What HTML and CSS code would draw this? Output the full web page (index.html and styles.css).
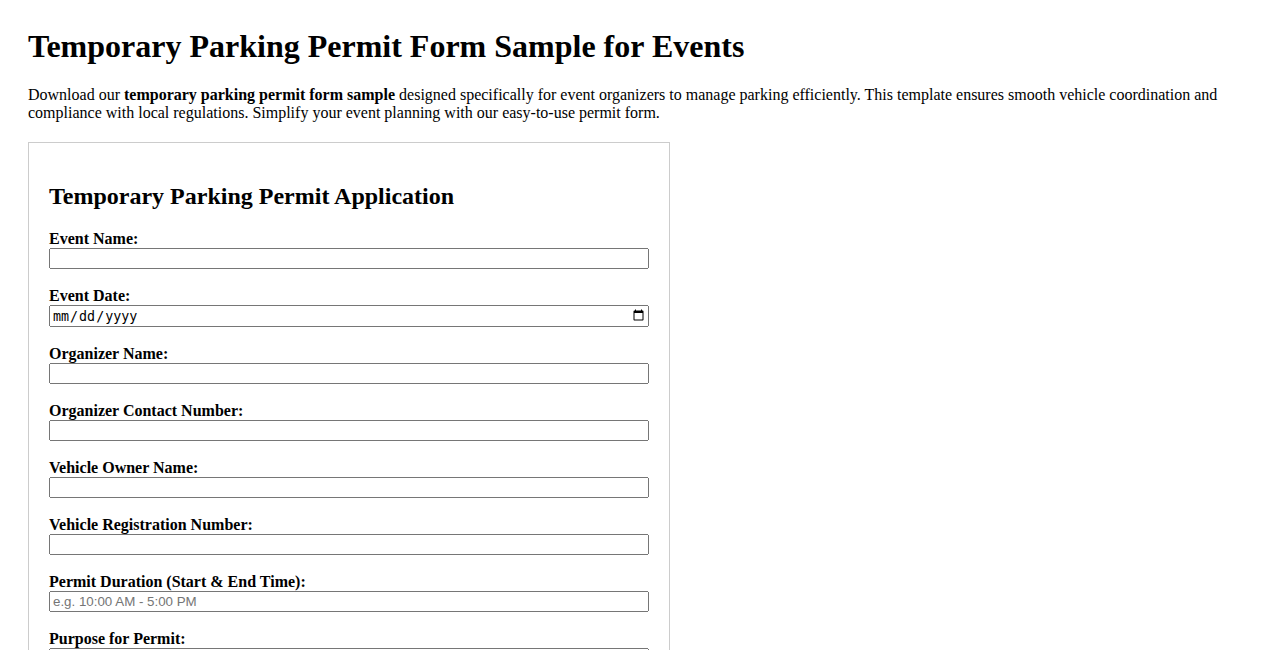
FILE: index.html
```html
<!DOCTYPE html>
<html lang="en">
<head>
<meta charset="utf-8">
<title>Temporary Parking Permit Form Sample for Events</title>
<link rel="stylesheet" href="styles.css">
</head>
<body>
<div class="page">
  <h1 class="title">Temporary Parking Permit Form Sample for Events</h1>
  <p class="intro">Download our <strong>temporary parking permit form sample</strong> designed specifically for event organizers to manage parking efficiently. This template ensures smooth vehicle coordination and compliance with local regulations. Simplify your event planning with our easy-to-use permit form.</p>
  <form class="permit-form">
    <h2 class="form-title">Temporary Parking Permit Application</h2>
    <label class="field-label" for="event-name">Event Name:</label>
    <input class="field-input" type="text" id="event-name">
    <label class="field-label" for="event-date">Event Date:</label>
    <input class="field-input" type="date" id="event-date">
    <label class="field-label" for="organizer-name">Organizer Name:</label>
    <input class="field-input" type="text" id="organizer-name">
    <label class="field-label" for="organizer-contact">Organizer Contact Number:</label>
    <input class="field-input" type="tel" id="organizer-contact">
    <label class="field-label" for="owner-name">Vehicle Owner Name:</label>
    <input class="field-input" type="text" id="owner-name">
    <label class="field-label" for="reg-number">Vehicle Registration Number:</label>
    <input class="field-input" type="text" id="reg-number">
    <label class="field-label" for="duration">Permit Duration (Start &amp; End Time):</label>
    <input class="field-input" type="text" id="duration" placeholder="e.g. 10:00 AM - 5:00 PM">
    <label class="field-label" for="purpose">Purpose for Permit:</label>
    <textarea class="field-input" id="purpose" rows="3"></textarea>
  </form>
</div>
</body>
</html>
```
FILE: styles.css
```css
html, body {
  margin: 0;
  padding: 0;
  background: #fff;
  color: #000;
}
body {
  font-family: "Liberation Serif", "Times New Roman", serif;
  font-size: 16px;
}
.page {
  padding: 28px;
}
.title {
  font-size: 32px;
  font-weight: bold;
  margin: 0 0 21.44px;
}
.intro {
  margin: 0 0 20px;
}
.permit-form {
  width: 600px;
  padding: 20px;
  border: 1px solid #ccc;
}
.form-title {
  font-size: 24px;
  margin: 19.92px 0 19.92px;
}
.field-label {
  display: block;
  font-weight: bold;
}
.field-input {
  display: block;
  width: 100%;
  box-sizing: border-box;
  margin: 0 0 18.1px;
}
```
